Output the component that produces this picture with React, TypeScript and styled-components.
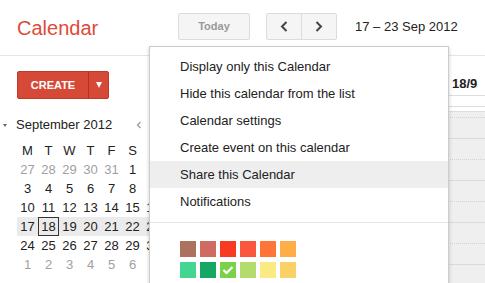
import React from 'react'
import styled, { createGlobalStyle } from 'styled-components';

const GlobalStyle = createGlobalStyle`
  html, body {
    margin: 0;
    padding: 0;
    background: #fff;
    font-family: "Liberation Sans", Arial, sans-serif;
    color: #222;
  }
`

const weeks = [
  [27, 28, 29, 30, 31, 1, 2],
  [3, 4, 5, 6, 7, 8, 9],
  [10, 11, 12, 13, 14, 15, 16],
  [17, 18, 19, 20, 21, 22, 23],
  [24, 25, 26, 27, 28, 29, 30],
  [1, 2, 3, 4, 5, 6, 7],
]

const menuItems = [
  'Display only this Calendar',
  'Hide this calendar from the list',
  'Calendar settings',
  'Create event on this calendar',
  'Share this Calendar',
  'Notifications',
]

const swatches = [
  '#ac725e', '#d06b64', '#f83a22', '#fa573c', '#ff7537', '#ffad46',
  '#42d692', '#16a765', '#7bd148', '#b3dc6c', '#fbe983', '#fad165',
]

const isGrey = (w: number, d: number) => (w === 0 && d < 5) || w === 5

const App = () => {
  return (
    <Page>
      <GlobalStyle />
      <TopBar>
        <Logo>Calendar</Logo>
        <TodayButton>Today</TodayButton>
        <NavGroup>
          <NavButton>
            <svg width="8" height="11" viewBox="0 0 8 11">
              <polyline points="6.5,1 2,5.5 6.5,10" fill="none" stroke="#444" strokeWidth="2" />
            </svg>
          </NavButton>
          <NavButton>
            <svg width="8" height="11" viewBox="0 0 8 11">
              <polyline points="1.5,1 6,5.5 1.5,10" fill="none" stroke="#444" strokeWidth="2" />
            </svg>
          </NavButton>
        </NavGroup>
        <DateRange>17 – 23 Sep 2012</DateRange>
      </TopBar>

      <Body>
        <Sidebar>
          <CreateButton>
            <CreateLabel>CREATE</CreateLabel>
            <CreateArrow><Triangle /></CreateArrow>
          </CreateButton>

          <MonthRow>
            <Caret />
            <MonthName>September 2012</MonthName>
            <svg width="6" height="8" viewBox="0 0 6 8">
              <polyline points="4.5,1 1.5,4 4.5,7" fill="none" stroke="#999" strokeWidth="1.2" />
            </svg>
          </MonthRow>

          <MiniGrid>
            {['M', 'T', 'W', 'T', 'F', 'S', 'S'].map((d, i) => (
              <DayHead key={i}>{d}</DayHead>
            ))}
            {weeks.map((week, w) => (
              <WeekRow key={w} $current={w === 3}>
                {week.map((d, i) => (
                  <DayCell key={i} $grey={isGrey(w, i)} $today={w === 3 && d === 18}>
                    {d}
                  </DayCell>
                ))}
              </WeekRow>
            ))}
          </MiniGrid>
        </Sidebar>

        <Main>
          <Column>
            <ColHead />
            <AllDay />
            <Band />
            <Slot $first />
            {Array.from({ length: 8 }).map((_, i) => (
              <Slot key={i} $dotted={i % 2 === 1} />
            ))}
          </Column>
          <Column>
            <ColHead>18/9</ColHead>
            <AllDay />
            <Band />
            <Slot $first $dotted />
            {Array.from({ length: 8 }).map((_, i) => (
              <Slot key={i} $dotted={i % 2 === 1} />
            ))}
          </Column>
        </Main>
      </Body>

      <Menu>
        {menuItems.map((item, i) => (
          <MenuItem key={item} $active={i === 4}>{item}</MenuItem>
        ))}
        <Separator />
        <Palette>
          {swatches.map((c, i) => (
            <Swatch key={c} $color={c}>
              {i === 8 && (
                <svg width="16" height="16" viewBox="0 0 16 16">
                  <polyline points="3.5,8 6.5,11 12.5,5" fill="none" stroke="#fff" strokeWidth="2.2" />
                </svg>
              )}
            </Swatch>
          ))}
        </Palette>
      </Menu>
    </Page>
  )
}

export default App;

const Page = styled.div`
  position: relative;
  width: 485px;
  height: 283px;
  overflow: hidden;
`
const TopBar = styled.div`
  display: flex;
  align-items: flex-start;
  height: 42px;
  padding-top: 13px;
  border-bottom: 1px solid #e5e5e5;
`
const Logo = styled.div`
  width: 161px;
  padding-left: 17px;
  padding-top: 2px;
  font-size: 20px;
  line-height: 27px;
  color: #dd4b39;
`
const TodayButton = styled.div`
  box-sizing: border-box;
  width: 72px;
  height: 27px;
  line-height: 25px;
  text-align: center;
  font-size: 11px;
  font-weight: bold;
  color: #999;
  background: #f5f5f5;
  border: 1px solid #dcdcdc;
  border-radius: 2px;
`
const NavGroup = styled.div`
  display: flex;
  margin-left: 16px;
  border: 1px solid #dcdcdc;
  border-radius: 2px;
  background: #f5f5f5;
`
const NavButton = styled.div`
  display: flex;
  align-items: center;
  justify-content: center;
  width: 34px;
  height: 25px;
  & + & {
    border-left: 1px solid #dcdcdc;
  }
`
const DateRange = styled.div`
  margin-left: 18px;
  font-size: 13px;
  line-height: 27px;
  color: #222;
`
const Body = styled.div`
  display: flex;
`
const Sidebar = styled.div`
  flex: none;
  width: 150px;
  padding-top: 15px;
`
const CreateButton = styled.div`
  display: flex;
  margin-left: 17px;
  width: 92px;
  height: 28px;
  box-sizing: border-box;
  background: #d64937;
  border: 1px solid #c13828;
  border-radius: 2px;
`
const CreateLabel = styled.div`
  width: 70px;
  text-align: center;
  line-height: 26px;
  font-size: 11px;
  font-weight: bold;
  color: #fff;
  border-right: 1px solid #b6301f;
`
const CreateArrow = styled.div`
  flex: 1;
  display: flex;
  align-items: center;
  justify-content: center;
`
const Triangle = styled.span`
  width: 0;
  height: 0;
  border-left: 3.5px solid transparent;
  border-right: 3.5px solid transparent;
  border-top: 6px solid #fff;
`
const MonthRow = styled.div`
  display: flex;
  align-items: center;
  margin-top: 16px;
  padding-right: 8px;
  height: 19px;
`
const Caret = styled.span`
  width: 0;
  height: 0;
  margin: 1px 9px 0 3px;
  border-left: 2.5px solid transparent;
  border-right: 2.5px solid transparent;
  border-top: 3.5px solid #666;
`
const MonthName = styled.div`
  flex: 1;
  font-size: 13px;
  color: #222;
`
const MiniGrid = styled.div`
  display: grid;
  grid-template-columns: repeat(7, 21px);
  margin: 7px 0 0 17px;
`
const DayHead = styled.div`
  height: 19px;
  line-height: 19px;
  text-align: center;
  font-size: 13px;
  color: #222;
`
const WeekRow = styled.div<{ $current?: boolean }>`
  display: contents;
  & > div {
    background: ${(p) => (p.$current ? '#ebebeb' : 'transparent')};
  }
`
const DayCell = styled.div<{ $grey?: boolean; $today?: boolean }>`
  box-sizing: border-box;
  height: 19px;
  line-height: ${(p) => (p.$today ? '17px' : '19px')};
  text-align: center;
  font-size: 13px;
  color: ${(p) => (p.$grey ? '#a0a0a0' : '#222')};
  border: ${(p) => (p.$today ? '1px solid #333' : 'none')};
`
const Main = styled.div`
  flex: 1;
  display: grid;
  grid-template-columns: 298px 1fr;
`
const Column = styled.div`
  display: flex;
  flex-direction: column;
`
const ColHead = styled.div`
  height: 35px;
  padding: 0 0 4px 4px;
  display: flex;
  align-items: flex-end;
  font-size: 13px;
  font-weight: bold;
  color: #222;
  border-bottom: 1px solid #ddd;
`
const AllDay = styled.div`
  height: 10px;
  border-bottom: 1px solid #ddd;
`
const Band = styled.div`
  height: 4px;
  border-bottom: 1px solid #ddd;
`
const Slot = styled.div<{ $dotted?: boolean; $first?: boolean }>`
  height: ${(p) => (p.$first ? '5px' : '20px')};
  background: #efefef;
  border-bottom: 1px ${(p) => (p.$dotted ? 'dotted #d4d4d4' : 'solid #dadada')};
`
const Menu = styled.div`
  position: absolute;
  left: 149px;
  top: 46px;
  width: 298px;
  height: 260px;
  padding-top: 6px;
  background: #fff;
  border: 1px solid rgba(0, 0, 0, 0.2);
  box-shadow: 0 2px 4px rgba(0, 0, 0, 0.2);
`
const MenuItem = styled.div<{ $active?: boolean }>`
  height: 27px;
  line-height: 27px;
  padding-left: 30px;
  font-size: 13px;
  color: #222;
  background: ${(p) => (p.$active ? '#eee' : 'transparent')};
`
const Separator = styled.div`
  margin-top: 7px;
  border-top: 1px solid #e5e5e5;
`
const Palette = styled.div`
  display: grid;
  grid-template-columns: repeat(6, 16px);
  column-gap: 4px;
  row-gap: 5px;
  margin: 18px 0 0 30px;
`
const Swatch = styled.div<{ $color: string }>`
  width: 16px;
  height: 16px;
  background: ${(p) => p.$color};
  svg {
    display: block;
  }
`
